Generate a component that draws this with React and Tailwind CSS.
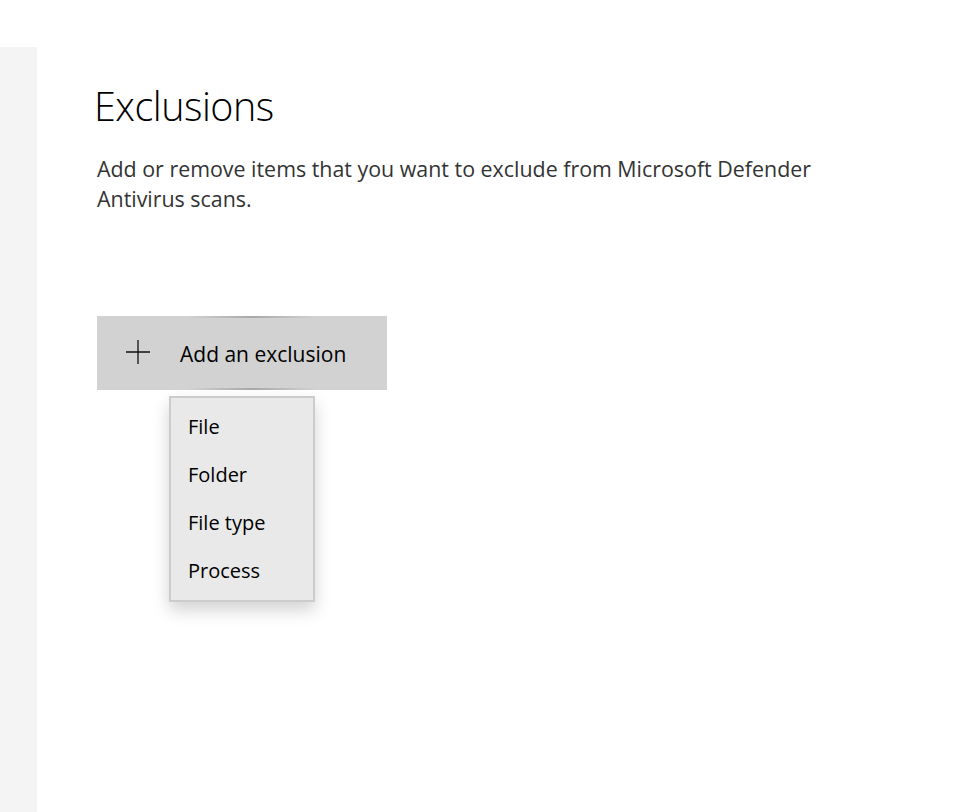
import React from "react";

const items = ["File", "Folder", "File type", "Process"];

function App() {
  return (
    <div
      className="flex w-[977px] h-[812px] bg-white overflow-hidden"
      style={{ fontFamily: '"Open Sans", "Noto Sans", sans-serif' }}
    >
      <div className="flex flex-col w-[37px] shrink-0">
        <div className="h-[47px] bg-white" />
        <div className="flex-1 bg-[#f4f4f4]" />
      </div>

      <main className="flex-1 pl-[57px] pt-[80px]">
        <h1 className="text-[39.5px] leading-[52px] font-light text-black tracking-[-0.5px]">
          Exclusions
        </h1>

        <p className="mt-[22px] ml-[3px] w-[780px] text-[21.4px] leading-[30px] text-[#333333]">
          Add or remove items that you want to exclude from Microsoft Defender
          Antivirus scans.
        </p>

        <div className="relative ml-[3px] mt-[102px] w-[290px]">
          <button className="relative flex items-center w-[290px] h-[74px] bg-[#d2d2d2] text-black">
            <span className="absolute top-0 left-[90px] w-[130px] h-[2px] bg-gradient-to-r from-transparent via-[#a8a8a8] to-transparent" />
            <span className="absolute bottom-0 left-[90px] w-[130px] h-[2px] bg-gradient-to-r from-transparent via-[#a8a8a8] to-transparent" />
            <svg
              width="24"
              height="24"
              viewBox="0 0 24 24"
              className="ml-[29px] mb-[2px]"
            >
              <path d="M12 0v24M0 12h24" stroke="#111" strokeWidth="1.3" />
            </svg>
            <span className="ml-[30px] pt-[4px] text-[21px]">Add an exclusion</span>
          </button>

          <div className="ml-[72px] mt-[6px] w-[146px] border-2 border-[#cccccc] bg-[#e9e9e9] py-[5px] shadow-[0_8px_16px_rgba(0,0,0,0.18)]">
            {items.map((item) => (
              <div
                key={item}
                className="h-[48px] flex items-center pl-[17px] text-[20px] text-black"
              >
                {item}
              </div>
            ))}
          </div>
        </div>
      </main>
    </div>
  );
}

export default App;
